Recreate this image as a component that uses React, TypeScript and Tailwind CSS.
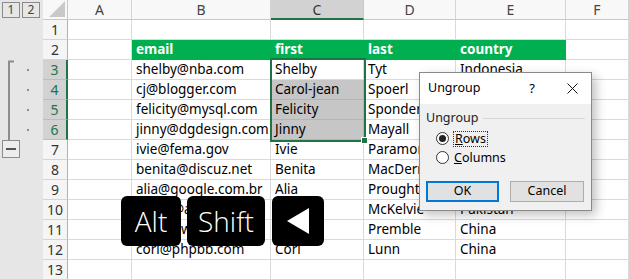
import React from "react";

const cols = [
  { l: "A", w: 64 },
  { l: "B", w: 139 },
  { l: "C", w: 93 },
  { l: "D", w: 92 },
  { l: "E", w: 110 },
  { l: "F", w: 63 },
];

const rows: string[][] = [
  ["", "", "", "", "", ""],
  ["", "email", "first", "last", "country", ""],
  ["", "shelby@nba.com", "Shelby", "Tyt", "Indonesia", ""],
  ["", "cj@blogger.com", "Carol-jean", "Spoerl", "Russia", ""],
  ["", "felicity@mysql.com", "Felicity", "Sponder", "Brazil", ""],
  ["", "jinny@dgdesign.com", "Jinny", "Mayall", "Philippines", ""],
  ["", "ivie@fema.gov", "Ivie", "Paramore", "China", ""],
  ["", "benita@discuz.net", "Benita", "MacDermott", "Portugal", ""],
  ["", "alia@google.com.br", "Alia", "Proughten", "France", ""],
  ["", "tandy@amazon.com", "Tandy", "McKelvie", "Pakistan", ""],
  ["", "kip@prweb.com", "Kip", "Premble", "China", ""],
  ["", "cori@phpbb.com", "Cori", "Lunn", "China", ""],
  ["", "", "", "", "", ""],
];

const cellFont = { fontFamily: '"Noto Sans", "Open Sans", sans-serif' };

function OutlinePanel() {
  return (
    <div className="relative w-[43px] shrink-0 bg-[#e6e6e6]">
      <div className="flex h-5 gap-[2px] pl-[2px] pt-[2px]">
        <div className="flex h-[16px] w-[18px] items-center justify-center border border-[#8a8a8a] text-[12px] text-[#444]">1</div>
        <div className="flex h-[16px] w-[18px] items-center justify-center border border-[#8a8a8a] text-[12px] text-[#444]">2</div>
      </div>
      <svg className="absolute left-0 top-0" width="43" height="279">
        <path d="M14 61.5 H9 V140" stroke="#8c8c8c" strokeWidth="2" fill="none" />
        {[70, 90, 110, 130].map((y) => (
          <rect key={y} x="27" y={y - 1} width="2" height="2" fill="#8c8c8c" />
        ))}
        <rect x="2.5" y="140.5" width="17" height="17" fill="#ececec" stroke="#8c8c8c" />
        <rect x="6" y="148" width="10" height="2" fill="#555" />
      </svg>
    </div>
  );
}

function Sheet() {
  return (
    <div className="relative flex-1" style={cellFont}>
      <div className="grid grid-cols-[25px_64px_139px_93px_92px_110px_63px]">
        {/* header row */}
        <div className="relative h-5 border-b border-r border-[#c8c8c8] bg-[#f8f8f8]">
          <svg className="absolute bottom-[2px] right-[2px]" width="16" height="16">
            <polygon points="16,0 16,16 0,16" fill="#c9c9c9" />
          </svg>
        </div>
        {cols.map((c) => (
          <div
            key={c.l}
            className={
              c.l === "C"
                ? "flex h-5 items-center justify-center border-b-2 border-r border-b-[#217346] border-r-[#c8c8c8] bg-[#d2d2d2] text-[14px] text-[#333]"
                : "flex h-5 items-center justify-center border-b border-r border-[#d4d4d4] border-b-[#c8c8c8] bg-[#f8f8f8] text-[14px] text-[#444]"
            }
          >
            {c.l}
          </div>
        ))}
        {rows.map((r, i) => {
          const n = i + 1;
          const sel = n >= 3 && n <= 6;
          return (
            <React.Fragment key={n}>
              <div
                className={
                  sel
                    ? "flex h-5 items-center justify-center border-b border-r-2 border-b-[#bdbdbd] border-r-[#217346] bg-[#d2d2d2] text-[14px] text-[#217346]"
                    : "flex h-5 items-center justify-center border-b border-r border-[#d4d4d4] border-r-[#b0b0b0] bg-[#f5f5f5] text-[14px] text-[#333]"
                }
              >
                {n}
              </div>
              {r.map((v, j) => {
                const green = n === 2 && j >= 1 && j <= 4;
                const gray = j === 2 && n >= 4 && n <= 6;
                let cls = "flex h-5 items-center overflow-hidden whitespace-nowrap pl-1 text-[13.5px] ";
                if (green) cls += "bg-[#00b050] font-bold text-white border-b border-[#00b050]";
                else if (gray) cls += "bg-[#c6c6c6] text-black border-b border-r border-[#b4b4b4]";
                else cls += "bg-white text-black border-b border-r border-[#dadada]";
                return (
                  <div key={j} className={cls}>
                    {v}
                  </div>
                );
              })}
            </React.Fragment>
          );
        })}
      </div>
      {/* selection border C3:C6 */}
      <div className="pointer-events-none absolute left-[227px] top-[58px] h-[84px] w-[96px] border-2 border-[#217346]" />
      <div className="absolute left-[318px] top-[137px] h-[7px] w-[7px] border border-white bg-[#217346]" />
    </div>
  );
}

function Dialog() {
  const f = { fontFamily: '"Noto Sans", "Open Sans", sans-serif' };
  return (
    <div
      className="absolute left-[419px] top-[72px] flex h-[139px] w-[173px] flex-col border border-[#8a8a8a] bg-[#f0f0f0] shadow-[4px_4px_10px_rgba(0,0,0,0.25)]"
      style={f}
    >
      <div className="flex h-[31px] items-center bg-white pl-[8px] text-[12.5px] text-black">
        <span className="flex-1">Ungroup</span>
        <span className="mr-[32px] text-[13px]">?</span>
        <svg className="mr-[13px]" width="11" height="11" viewBox="0 0 11 11">
          <path d="M0.5 0.5 L10.5 10.5 M10.5 0.5 L0.5 10.5" stroke="#111" strokeWidth="1" />
        </svg>
      </div>
      <div className="flex flex-col px-[6px] pt-[5px]">
        <div className="flex items-center text-[12.5px] text-[#222]">
          <span>Ungroup</span>
          <div className="ml-[5px] h-px flex-1 bg-[#d8d8d8]" />
        </div>
        <div className="ml-[10px] mt-[3px] flex items-center gap-[4px] text-[12.5px] text-black">
          <span className="flex h-[13px] w-[13px] items-center justify-center rounded-full border border-[#333] bg-white">
            <span className="h-[7px] w-[7px] rounded-full bg-[#222]" />
          </span>
          <span className="border border-dotted border-[#333] px-px leading-[14px]">
            <span className="underline">R</span>ows
          </span>
        </div>
        <div className="ml-[10px] mt-[4px] flex items-center gap-[5px] text-[12.5px] text-black">
          <span className="h-[13px] w-[13px] rounded-full border border-[#333] bg-white" />
          <span className="leading-[14px]">
            <span className="underline">C</span>olumns
          </span>
        </div>
        <div className="mt-[16px] flex gap-[11px]">
          <div className="flex h-[21px] w-[73px] items-center justify-center border-2 border-[#0078d7] bg-[#e1e1e1] text-[12.5px] text-black">
            OK
          </div>
          <div className="flex h-[21px] w-[74px] items-center justify-center border border-[#adadad] bg-[#e1e1e1] text-[12.5px] text-black">
            Cancel
          </div>
        </div>
      </div>
    </div>
  );
}

function Keys() {
  const f = { fontFamily: '"Open Sans", "Noto Sans", sans-serif' };
  return (
    <div className="absolute left-[121px] top-[196px] flex gap-[6px]" style={f}>
      <div className="flex h-[50px] w-[60px] items-center justify-center rounded-[6px] bg-black text-[28px] font-light text-white">
        Alt
      </div>
      <div className="flex h-[50px] w-[78px] items-center justify-center rounded-[6px] bg-black text-[28px] font-light text-white">
        Shift
      </div>
      <div className="ml-px flex h-[50px] w-[52px] items-center justify-center rounded-[6px] bg-black">
        <svg width="22" height="26" viewBox="0 0 22 26">
          <polygon points="0,13 22,0 22,26" fill="white" />
        </svg>
      </div>
    </div>
  );
}

export default function App() {
  return (
    <div className="relative h-[279px] w-[629px] overflow-hidden bg-white">
      <div className="flex h-full">
        <OutlinePanel />
        <Sheet />
      </div>
      <Dialog />
      <Keys />
    </div>
  );
}
